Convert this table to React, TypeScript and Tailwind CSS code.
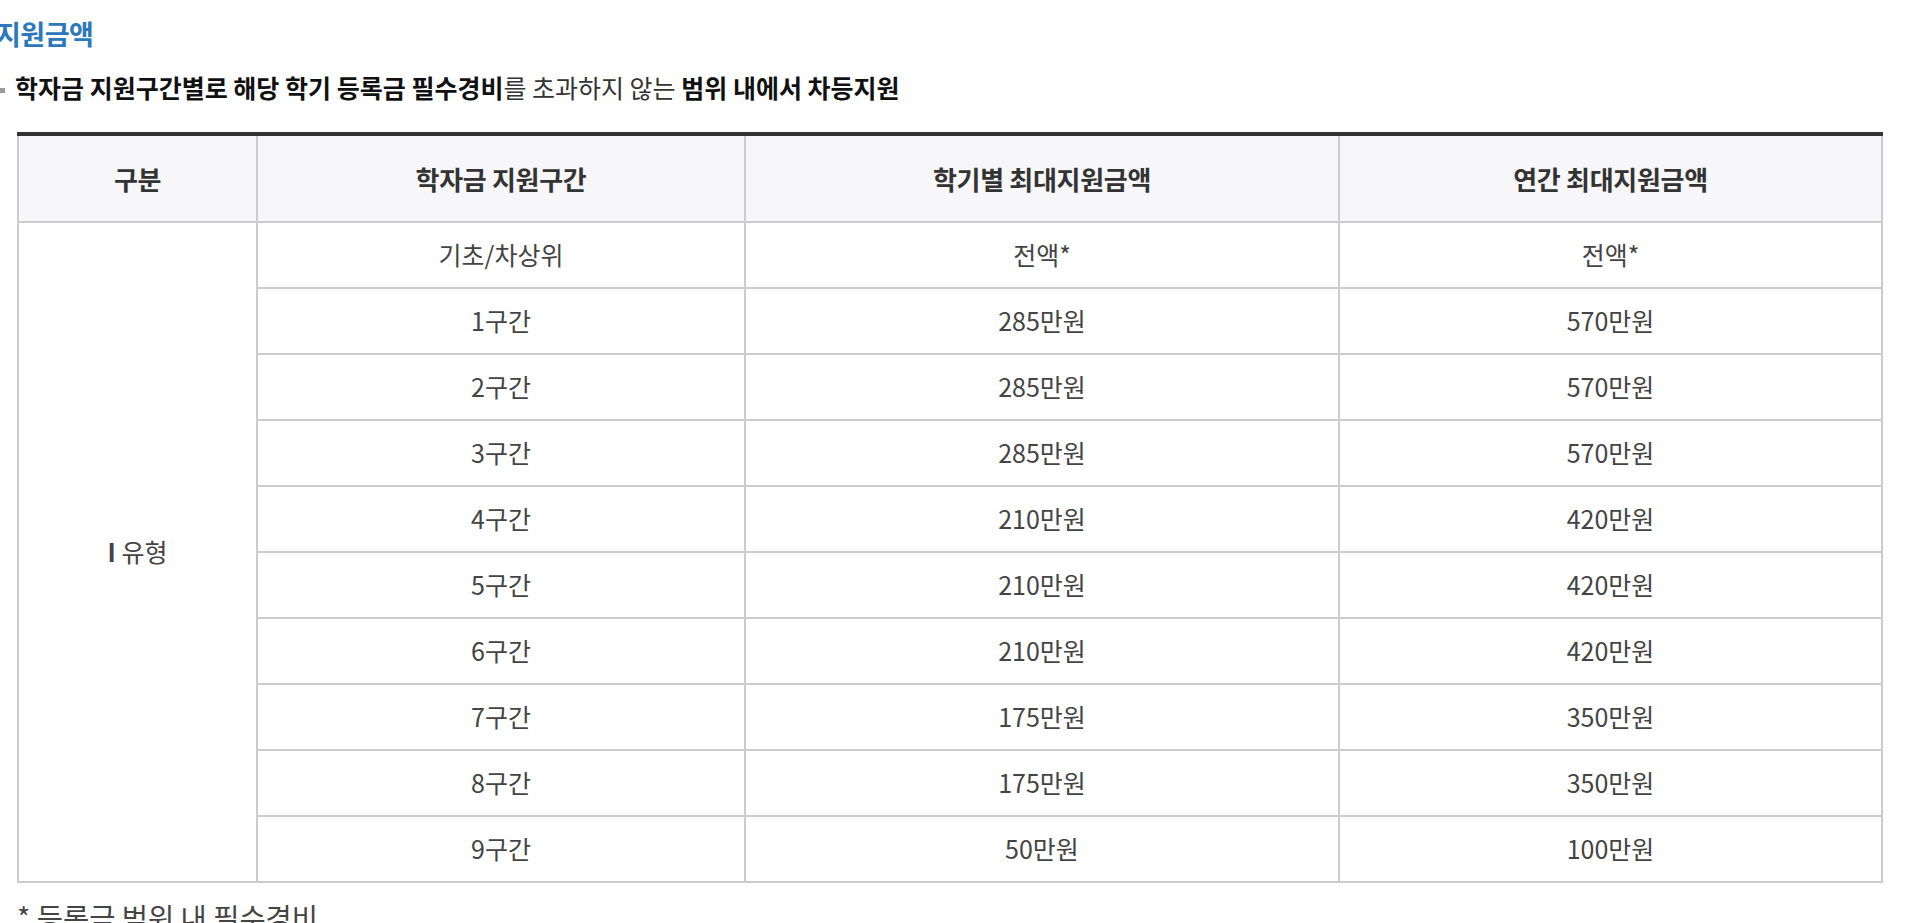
import React from "react";

const rows: [string, string, string][] = [
  ["기초/차상위", "전액*", "전액*"],
  ["1구간", "285만원", "570만원"],
  ["2구간", "285만원", "570만원"],
  ["3구간", "285만원", "570만원"],
  ["4구간", "210만원", "420만원"],
  ["5구간", "210만원", "420만원"],
  ["6구간", "210만원", "420만원"],
  ["7구간", "175만원", "350만원"],
  ["8구간", "175만원", "350만원"],
  ["9구간", "50만원", "100만원"],
];

export default function App() {
  return (
    <div
      className="w-[1921px] h-[923px] overflow-hidden bg-white pt-[18px]"
      style={{ fontFamily: '"Noto Sans CJK KR", "Noto Sans", sans-serif' }}
    >
      <h2 className="ml-[-4px] text-[27px] leading-[32px] font-bold text-[#2b78bd] tracking-[-0.5px]">
        지원금액
      </h2>
      <div className="mt-[21px] flex items-center h-[32px]">
        <span className="w-[5px] h-[5px] bg-[#9a9a9a] mt-[6px]" />
        <p className="ml-[10px] text-[25px] leading-[32px] text-[#333]">
          <b className="font-bold text-[#111]">학자금 지원구간별로 해당 학기 등록금 필수경비</b>를 초과하지 않는{" "}
          <b className="font-bold text-[#111]">범위 내에서 차등지원</b>
        </p>
      </div>
      <table className="mt-[29px] ml-[17px] w-[1864px] table-fixed border-collapse text-[25px]">
        <colgroup>
          <col className="w-[239px]" />
          <col className="w-[488px]" />
          <col className="w-[594px]" />
          <col className="w-[543px]" />
        </colgroup>
        <thead>
          <tr className="h-[88px]">
            {["구분", "학자금 지원구간", "학기별 최대지원금액", "연간 최대지원금액"].map((h) => (
              <th
                key={h}
                className="border-2 border-[#cccccc] border-t-4 border-t-[#333333] bg-[#f7f7f9] font-bold text-[26px] text-[#333] text-center align-middle tracking-[-0.3px]"
              >
                {h}
              </th>
            ))}
          </tr>
        </thead>
        <tbody>
          {rows.map((r, i) => (
            <tr key={i} className="h-[66px]">
              {i === 0 && (
                <td
                  rowSpan={10}
                  className="border-2 border-[#cccccc] text-center align-middle text-[#444]"
                >
                  <span className="font-semibold">I</span> 유형
                </td>
              )}
              {r.map((c, j) => (
                <td
                  key={j}
                  className="border-2 border-[#cccccc] text-center align-middle text-[#444]"
                >
                  {c}
                </td>
              ))}
            </tr>
          ))}
        </tbody>
      </table>
      <p className="mt-[17px] ml-[17px] text-[28.5px] leading-[34px] text-[#444]">
        * 등록금 범위 내 필수경비
      </p>
    </div>
  );
}
